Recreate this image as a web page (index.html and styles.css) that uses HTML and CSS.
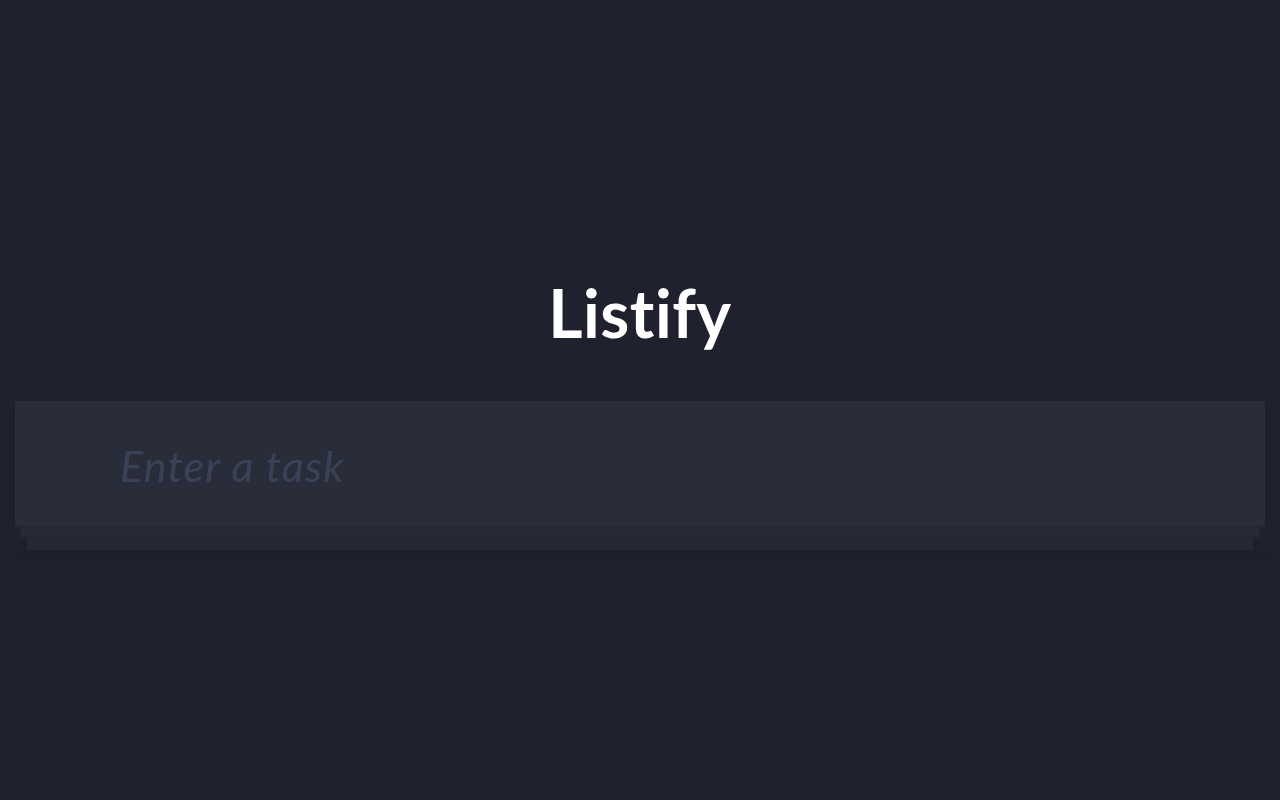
FILE: index.html
```html
<!DOCTYPE html>
<html lang="en">
<head>
<meta charset="utf-8">
<title>Listify</title>
<link rel="stylesheet" href="styles.css">
</head>
<body>
<main class="app">
  <h1 class="title">Listify</h1>
  <div class="stack">
    <div class="input-box">
      <input class="task-input" type="text" placeholder="Enter a task">
    </div>
    <div class="layer layer-1"></div>
    <div class="layer layer-2"></div>
  </div>
</main>
</body>
</html>
```

FILE: styles.css
```css
html, body {
  margin: 0;
  padding: 0;
  background: #20212e;
  height: 100%;
}
.app {
  display: flex;
  flex-direction: column;
  padding: 273px 15px 0;
  font-family: "Lato", "Noto Sans", sans-serif;
}
.title {
  margin: 0;
  text-align: center;
  color: #ffffff;
  font-size: 66px;
  font-weight: 700;
  line-height: 80px;
  letter-spacing: 0.5px;
}
.stack {
  margin-top: 48px;
  display: flex;
  flex-direction: column;
  align-items: stretch;
  box-shadow: 2px 8px 12px rgba(0, 0, 0, 0.05);
}
.input-box {
  height: 126px;
  background: #292c39;
  display: flex;
  align-items: center;
  padding-left: 105px;
  border-bottom: 1px solid #22242f;
  box-sizing: border-box;
}
.task-input {
  background: transparent;
  border: none;
  outline: none;
  width: 100%;
  font-family: "Lato", "Noto Sans", sans-serif;
  font-style: italic;
  font-weight: 400;
  font-size: 43px;
  letter-spacing: 1.2px;
  color: #d0d4e0;
  padding: 0;
  margin-top: 4px;
}
.task-input::placeholder {
  color: #3b4157;
  font-style: italic;
}
.layer {
  box-sizing: border-box;
}
.layer-1 {
  margin: 0 6px;
  height: 11px;
  background: #282a37;
  border-bottom: 1px solid #22242f;
}
.layer-2 {
  margin: 0 12px;
  height: 12px;
  background: #262835;
}
```
